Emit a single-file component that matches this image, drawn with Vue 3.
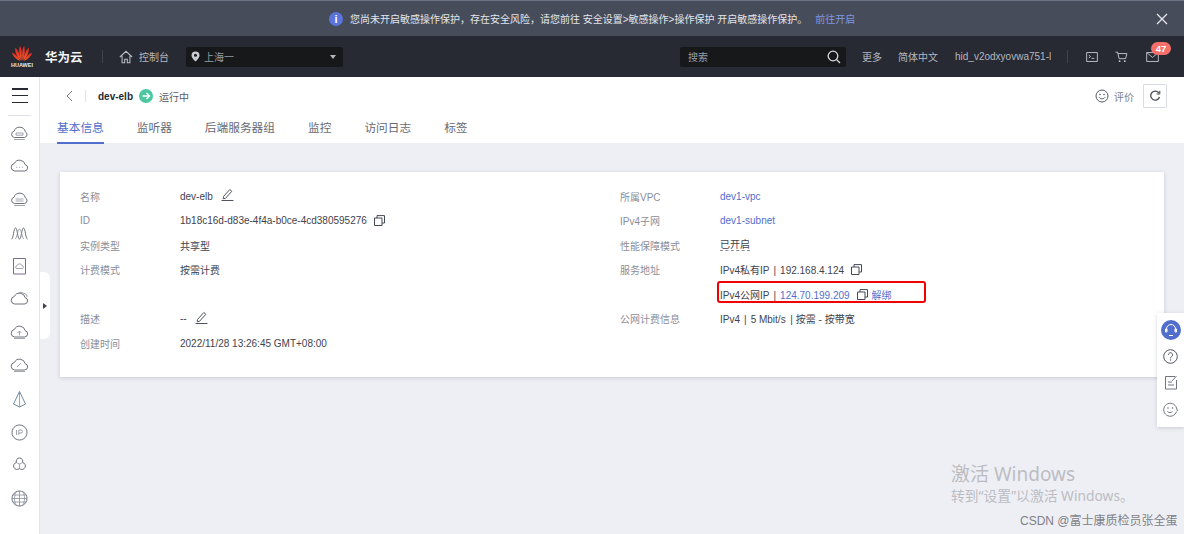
<script setup>
const cloud = 'M5.500 15h10a3.200 3.200 0 0 0 .7-6.300A5.800 5.800 0 0 0 5.300 7.500 3.800 3.800 0 0 0 5.500 15z'
const flatCloud = 'M5.500 14.500h10a3 3 0 0 0 .8-5.700 5.800 5.800 0 0 0-11.200-.6 3.200 3.200 0 0 0 .4 6.300z'

const sideIcons = [
  { base: flatCloud, extra: 'M7 10h7v2.200H7zM5 16.500h11' },
  { base: cloud, extra: 'M7 11.300h1M10 11.300h1M13 11.300h1' },
  { base: flatCloud, extra: 'M6.500 10h8M6.500 12h8M5 16.500h11' },
  { base: 'M2.500 16C4.500 16 4.500 5 6.500 5S8.500 16 10.500 16 12.500 5 14.500 5 16.500 16 18.500 16', extra: 'M6 16C8 16 8.500 6 10.500 6S13 16 15 16' },
  { base: 'M4.500 2.500h12v15.500h-12z', extra: 'M8 12.500h5a1.300 1.300 0 0 0 .2-2.600 2.800 2.800 0 0 0-5.400 0A1.300 1.300 0 0 0 8 12.500z', tint: '#6b5b85' },
  { base: cloud, extra: 'M9 4.500a4 4 0 0 1 3-1.200l4 1.500a3 3 0 0 1 2 3.500' },
  { base: cloud, extra: 'M10.500 13.500V9M8.500 11l2-2 2 2M5 16.500h11' },
  { base: cloud, extra: 'M8 12l3.500-3.500M11.500 8.300h.6M5 16.500h11' },
  { base: 'M10.500 2.500L4.500 15l6 3 6-3z', extra: 'M10.500 2.500V18', tint: '#5f7d96' },
  { base: 'M10.500 3a7.500 7.500 0 1 0 .01 0z', extra: 'M7.500 8v5M9.800 13V8h2.200a1.500 1.500 0 0 1 0 3H9.800' },
  { base: 'M10.500 3a3.200 3.200 0 0 1 3 4.500 3.500 3.500 0 1 1-3 6 3.500 3.500 0 1 1-3-6 3.200 3.200 0 0 1 3-4.500z', extra: 'M7.500 7.500a4 4 0 0 0 6 0M10.500 13.500V9' },
  { base: 'M10.500 3a7.500 7.500 0 1 0 .01 0z', extra: 'M3 10.500h15M4 7h13M4 14h13M10.500 3v15M7 4c-2 4-2 9 0 13M14 4c2 4 2 9 0 13' }
]

const leftRows = [
  { label: '名称', value: 'dev-elb', edit: true },
  { label: 'ID', value: '1b18c16d-d83e-4f4a-b0ce-4cd380595276', copy: true },
  { label: '实例类型', value: '共享型' },
  { label: '计费模式', value: '按需计费' },
  { label: '', value: '' },
  { label: '描述', value: '--', edit: true },
  { label: '创建时间', value: '2022/11/28 13:26:45 GMT+08:00' }
]

const tabs = ['基本信息', '监听器', '后端服务器组', '监控', '访问日志', '标签']
</script>

<template>
  <div class="page">
    <div class="notice">
      <span class="notice-icon">i</span>
      <span class="notice-text">您尚未开启敏感操作保护，存在安全风险，请您前往 安全设置&gt;敏感操作&gt;操作保护 开启敏感操作保护。</span>
      <a class="notice-link">前往开启</a>
      <svg class="notice-close" width="12" height="12" viewBox="0 0 12 12"><path d="M1 1l10 10M11 1L1 11" stroke="#e6e8ee" stroke-width="1.300" fill="none" /></svg>
    </div>

    <header class="topbar">
      <div class="logo">
        <svg width="22" height="17" viewBox="0 0 24 18">
          <defs>
            <linearGradient id="petal" x1="0" y1="0" x2="0" y2="1">
              <stop offset="0" stop-color="#e3261c" />
              <stop offset="1" stop-color="#f0592b" />
            </linearGradient>
          </defs>
          <g fill="url(#petal)">
            <path d="M11.400 17C8.800 11 8.400 5.500 9.600 .5 11.400 2.500 12.400 9 11.400 17z" />
            <path d="M12.600 17C15.200 11 15.600 5.500 14.400 .5 12.600 2.500 11.600 9 12.600 17z" />
            <path d="M10.600 17C6.800 13 4.200 8.500 4.600 2.800 7 4.500 10.200 10.500 10.600 17z" />
            <path d="M13.400 17C17.200 13 19.800 8.500 19.400 2.800 17 4.500 13.800 10.500 13.400 17z" />
            <path d="M10 17.300C6 15.500 2.200 12.500 .8 7.800c3.800 1.200 7.200 5 9.200 9.500z" />
            <path d="M14 17.300c4-1.800 7.800-4.800 9.200-9.500-3.800 1.200-7.200 5-9.200 9.500z" />
          </g>
        </svg>
        <span class="logo-word">HUAWEI</span>
      </div>
      <span class="brand">华为云</span>
      <span class="top-sep"></span>
      <svg class="home" width="14" height="14" viewBox="0 0 16 16"><path d="M1 8l7-6.500L15 8M3.500 6.500V14.500h3v-4h3v4h3V6.500" fill="none" stroke="#b9bcc4" stroke-width="1.200" /></svg>
      <span class="console">控制台</span>
      <div class="region">
        <svg width="9" height="11" viewBox="0 0 9 11"><path d="M4.500 0.500a4 4 0 0 1 4 4c0 2.500-4 6-4 6s-4-3.500-4-6a4 4 0 0 1 4-4z" fill="#c9ccd2" /><circle cx="4.500" cy="4.300" r="1.500" fill="#17181a" /></svg>
        <span class="region-name">上海一</span>
        <span class="caret"></span>
      </div>
      <div class="search">
        <span>搜索</span>
        <svg width="14" height="14" viewBox="0 0 14 14"><circle cx="6" cy="6" r="4.800" fill="none" stroke="#d8dae0" stroke-width="1.300" /><path d="M9.500 9.500l3.500 3.500" stroke="#d8dae0" stroke-width="1.300" /></svg>
      </div>
      <span class="top-link more">更多</span>
      <span class="top-link lang">简体中文</span>
      <span class="top-link user">hid_v2odxyovwa751-l</span>
      <span class="top-sep user-sep"></span>
      <svg class="tool" width="12" height="10" viewBox="0 0 13 11"><path d="M.6.600h11.800v9.800H.6zM3 3.500l2 1.500-2 1.500M6 7h3" fill="none" stroke="#c4c7ce" stroke-width="1" /></svg>
      <svg class="tool" width="13" height="12" viewBox="0 0 14 12"><path d="M.5.800h2.300l1.600 7h7l1.400-5.500H3.200" fill="none" stroke="#c4c7ce" stroke-width="1" /><circle cx="5" cy="10.500" r="1" fill="#c4c7ce" /><circle cx="10.500" cy="10.500" r="1" fill="#c4c7ce" /></svg>
      <div class="mail">
        <svg width="13" height="10" viewBox="0 0 14 11"><path d="M.6.600h12.800v9.800H.6zM.6.600L7 6l6.400-5.400" fill="none" stroke="#c4c7ce" stroke-width="1" /></svg>
        <span class="badge">47</span>
      </div>
    </header>

    <div class="body">
      <aside class="sidebar">
        <div class="burger"><i></i><i></i><i></i></div>
        <div class="side-line"></div>
        <svg v-for="(icon, i) in sideIcons" :key="i" class="side-icon" width="21" height="21" viewBox="0 0 21 21">
          <path :d="icon.base" fill="none" :stroke="icon.tint || '#5c606c'" stroke-width="0.900" />
          <path :d="icon.extra" fill="none" stroke="#8a8e99" stroke-width="0.800" />
        </svg>
      </aside>

      <main class="main">
        <div class="head">
          <div class="head-row">
            <svg class="back" width="7" height="12" viewBox="0 0 7 12"><path d="M6 1L1 6l5 5" fill="none" stroke="#7b7f8a" stroke-width="1" /></svg>
            <span class="head-sep"></span>
            <span class="head-name">dev-elb</span>
            <span class="status-dot">
              <svg width="10" height="10" viewBox="0 0 10 10"><path d="M1.500 5h7M5.500 2l3 3-3 3" fill="none" stroke="#fff" stroke-width="1.400" /></svg>
            </span>
            <span class="status-text">运行中</span>
            <svg class="rate-icon" width="14" height="14" viewBox="0 0 14 14"><circle cx="7" cy="7" r="6" fill="none" stroke="#555a66" stroke-width="1" /><path d="M4 8.300c1.500 2 4.500 2 6 0" fill="none" stroke="#555a66" stroke-width="1" /><circle cx="5" cy="5.500" r=".8" fill="#555a66" /><circle cx="9" cy="5.500" r=".8" fill="#555a66" /></svg>
            <span class="rate-text">评价</span>
            <button class="refresh">
              <svg width="12" height="12" viewBox="0 0 12 12"><path d="M10 3.200A4.500 4.500 0 1 0 10.500 7" fill="none" stroke="#444954" stroke-width="1.300" /><path d="M10.800.800v3.200H7.600" fill="none" stroke="#444954" stroke-width="1" /></svg>
            </button>
          </div>
          <nav class="tabs">
            <span v-for="(tab, i) in tabs" :key="tab" class="tab" :class="{ active: i === 0 }">{{ tab }}</span>
          </nav>
        </div>

        <section class="card">
          <div class="col">
            <div v-for="(row, i) in leftRows" :key="i" class="row">
              <span class="label">{{ row.label }}</span>
              <span class="value">{{ row.value }}</span>
              <svg v-if="row.edit" class="edit" width="13" height="13" viewBox="0 0 13 13"><path d="M2.500 8.500L8.800 1.500l2 1.800L4.500 10.300l-2.300.5zM.5 12.500h12" fill="none" stroke="#50555f" stroke-width="1" /></svg>
              <svg v-if="row.copy" class="copy" width="11" height="11" viewBox="0 0 11 11"><path d="M.5 3h7.500v7.500H.5zM3 3V.6h7.500V8H8" fill="none" stroke="#444954" stroke-width="1" /></svg>
            </div>
          </div>
          <div class="col">
            <div class="row"><span class="label">所属VPC</span><a class="value link">dev1-vpc</a></div>
            <div class="row"><span class="label">IPv4子网</span><a class="value link">dev1-subnet</a></div>
            <div class="row"><span class="label">性能保障模式</span><span class="value dashed">已开启</span></div>
            <div class="row">
              <span class="label">服务地址</span>
              <span class="value">IPv4私有IP<span class="bar">|</span>192.168.4.124</span>
              <svg class="copy" width="11" height="11" viewBox="0 0 11 11"><path d="M.5 3h7.500v7.500H.5zM3 3V.6h7.500V8H8" fill="none" stroke="#444954" stroke-width="1" /></svg>
            </div>
            <div class="row">
              <span class="label"></span>
              <span class="value">IPv4公网IP<span class="bar">|</span><a class="link">124.70.199.209</a></span>
              <svg class="copy" width="11" height="11" viewBox="0 0 11 11"><path d="M.5 3h7.500v7.500H.5zM3 3V.6h7.500V8H8" fill="none" stroke="#444954" stroke-width="1" /></svg>
              <a class="link unbind">解绑</a>
              <span class="highlight"></span>
            </div>
            <div class="row"><span class="label">公网计费信息</span><span class="value">IPv4<span class="bar">|</span>5 Mbit/s<span class="bar tight">|</span>按需 - 按带宽</span></div>
          </div>
        </section>
      </main>
    </div>

    <div class="handle"><span></span></div>

    <div class="float-bar">
      <span class="service">
        <svg width="14" height="14" viewBox="0 0 14 14"><path d="M2.500 8V6a4.500 4.500 0 0 1 9 0v2M1.500 6h1.500v3H1.500zM11 6h1.500v3H11zM5 12.500h4" fill="none" stroke="#fff" stroke-width="1" /></svg>
      </span>
      <svg width="15" height="15" viewBox="0 0 15 15"><circle cx="7.500" cy="7.500" r="6.800" fill="none" stroke="#50555f" stroke-width="1" /><path d="M5.400 5.800a2.100 2.100 0 1 1 3.200 1.800c-.8.500-1.100.9-1.100 1.700" fill="none" stroke="#50555f" stroke-width="1" /><circle cx="7.500" cy="11" r=".7" fill="#50555f" /></svg>
      <svg width="14" height="15" viewBox="0 0 14 15"><path d="M11 1.500H1.500v12.500h11V5M4 7h4M4 10h6M8 6l4.500-5" fill="none" stroke="#70747f" stroke-width="1" /></svg>
      <svg width="15" height="15" viewBox="0 0 15 15"><path d="M13.500 9.500a6.500 6.500 0 1 1 0-3.500l1 3" fill="none" stroke="#70747f" stroke-width="1" /><circle cx="5" cy="6" r=".8" fill="#70747f" /><circle cx="9.500" cy="6" r=".8" fill="#70747f" /><path d="M4.500 9.500c1.500 1.500 3.500 1.500 5 0" fill="none" stroke="#70747f" stroke-width="1" /></svg>
    </div>

    <div class="activate">
      <div class="activate-title">激活 Windows</div>
      <div class="activate-sub">转到“设置”以激活 Windows。</div>
    </div>
    <div class="csdn">CSDN @富士康质检员张全蛋</div>
  </div>
</template>

<style>
html,
body {
  margin: 0;
  overflow: hidden;
}
</style>

<style scoped>
.page {
  position: relative;
  width: 1184px;
  height: 534px;
  overflow: hidden;
  background: #eeeff5;
  color: #3f434d;
  font-family: "Liberation Sans", "Noto Sans CJK SC", sans-serif;
  font-size: 10px;
  display: flex;
  flex-direction: column;
}

.notice {
  height: 36px;
  flex: none;
  box-sizing: border-box;
  padding-left: 329px;
  display: flex;
  align-items: center;
  background: #474c5a;
  border-top: 1px solid #6c7184;
  color: #e4e6eb;
}

.notice-icon {
  width: 14px;
  height: 14px;
  border-radius: 50%;
  background: #5a74dc;
  color: #fff;
  font-size: 11px;
  font-weight: 700;
  line-height: 14px;
  text-align: center;
  margin-right: 7px;
}

.notice-link {
  margin-left: 8px;
  color: #7f97e6;
}

.notice-close {
  margin-left: auto;
  margin-right: 16px;
}

.topbar {
  height: 41px;
  flex: none;
  display: flex;
  align-items: center;
  background: #272a33;
  color: #b4b7bf;
}

.logo {
  width: 24px;
  margin-left: 10px;
  display: flex;
  flex-direction: column;
  align-items: center;
}

.logo-word {
  color: #e8e8e8;
  font-size: 5.500px;
  line-height: 7px;
  font-weight: 700;
}

.brand {
  margin-left: 11px;
  color: #f2f3f5;
  font-size: 12.500px;
  font-weight: 700;
}

.top-sep {
  width: 1px;
  height: 13px;
  margin-left: 19px;
  background: #3f434e;
}

.home {
  margin-left: 16px;
}

.console {
  margin-left: 6.500px;
}

.region {
  width: 157px;
  height: 20px;
  box-sizing: border-box;
  margin-left: 17px;
  padding: 0 7px 0 5px;
  display: flex;
  align-items: center;
  background: #17181a;
  border-radius: 2px;
  color: #9a9da5;
}

.region-name {
  margin-left: 4px;
}

.caret {
  margin-left: auto;
  border-left: 3px solid transparent;
  border-right: 3px solid transparent;
  border-top: 4px solid #b4b7bf;
}

.search {
  width: 166px;
  height: 20px;
  box-sizing: border-box;
  margin-left: 337px;
  padding: 0 5px 0 8px;
  display: flex;
  align-items: center;
  justify-content: space-between;
  background: #17181a;
  border-radius: 2px;
  color: #9a9da5;
}

.more {
  margin-left: 16px;
}

.lang {
  margin-left: 16px;
}

.user {
  margin-left: 17px;
  width: 97px;
  white-space: nowrap;
  overflow: hidden;
}

.user-sep {
  margin-left: 15px;
}

.tool {
  margin-left: 17.500px;
}

.mail {
  position: relative;
  margin-left: 18px;
  display: flex;
}

.badge {
  position: absolute;
  left: 5px;
  top: -10px;
  width: 20px;
  height: 13px;
  border-radius: 7px;
  background: #f66f6a;
  color: #fff;
  font-size: 9.500px;
  font-weight: 700;
  line-height: 13px;
  text-align: center;
}

.body {
  flex: 1;
  min-height: 0;
  display: flex;
}

.sidebar {
  width: 40px;
  flex: none;
  box-sizing: border-box;
  background: #fff;
  border-right: 1px solid #e4e6ec;
  display: flex;
  flex-direction: column;
  align-items: center;
  padding-top: 11px;
}

.burger {
  width: 16px;
  height: 15px;
  display: flex;
  flex-direction: column;
  justify-content: space-between;
}

.burger i {
  display: block;
  height: 1.500px;
  background: #272a33;
}

.side-line {
  width: 23px;
  height: 1px;
  margin: 12px 0 7px;
  background: #e0e2e8;
}

.side-icon {
  flex: none;
  margin-bottom: 12.200px;
}

.main {
  flex: 1;
  min-width: 0;
}

.head {
  height: 68px;
  box-sizing: border-box;
  padding: 7px 17px 0;
  background: #fff;
  border-bottom: 2px solid #eeeff3;
}

.head-row {
  height: 24px;
  display: flex;
  align-items: center;
}

.back {
  margin-left: 9px;
}

.head-sep {
  width: 1px;
  height: 12px;
  margin-left: 12px;
  background: #e2e3e8;
}

.head-name {
  margin-left: 12px;
  color: #252830;
  font-weight: 700;
}

.status-dot {
  width: 14px;
  height: 14px;
  margin-left: 6px;
  border-radius: 50%;
  background: #4cc79f;
  display: flex;
  align-items: center;
  justify-content: center;
}

.status-text {
  margin-left: 6px;
  color: #575b66;
}

.rate-icon {
  margin-left: auto;
}

.rate-text {
  margin-left: 5px;
  color: #7b7f8a;
}

.refresh {
  width: 24px;
  height: 24px;
  margin-left: 9px;
  padding: 0;
  display: flex;
  align-items: center;
  justify-content: center;
  background: #fff;
  border: 1px solid #d9dbe2;
  border-radius: 1px;
}

.tabs {
  display: flex;
  gap: 33px;
  margin-top: 5px;
}

.tab {
  height: 31px;
  box-sizing: border-box;
  padding-top: 5px;
  font-size: 11.700px;
  color: #666a75;
}

.tab.active {
  color: #526ecc;
  border-bottom: 2px solid #526ecc;
}

.card {
  margin: 27px 20px 0;
  height: 205px;
  box-sizing: border-box;
  padding: 12px 20px;
  background: #fff;
  box-shadow: 0 1px 4px rgba(60, 65, 80, 0.22);
  display: grid;
  grid-template-columns: 540px 1fr;
}

.row {
  position: relative;
  height: 24.500px;
  display: flex;
  align-items: center;
}

.label {
  width: 100px;
  flex: none;
  color: #8a8e99;
}

.link {
  color: #526ecc;
}

.bar {
  margin: 0 4px;
}

.bar.tight {
  margin: 0 3px 0 4.500px;
}

.dashed {
  border-bottom: 1px dashed #8a8e99;
  line-height: 11px;
}

.edit {
  margin-left: 8px;
  margin-top: -3px;
}

.copy {
  margin-left: 7px;
}

.unbind {
  margin-left: 4px;
}

.highlight {
  position: absolute;
  left: 97px;
  top: -1px;
  width: 209px;
  height: 22px;
  box-sizing: border-box;
  border: 2.500px solid #f00000;
  border-radius: 3px;
}

.handle {
  position: absolute;
  left: 40px;
  top: 272px;
  width: 10px;
  height: 67px;
  background: #fff;
  border-radius: 0 6px 6px 0;
  display: flex;
  align-items: center;
  justify-content: center;
}

.handle span {
  border-top: 3px solid transparent;
  border-bottom: 3px solid transparent;
  border-left: 4px solid #3f434d;
}

.float-bar {
  position: absolute;
  right: 0;
  top: 313px;
  width: 27px;
  height: 114px;
  box-sizing: border-box;
  padding-top: 7px;
  background: #fff;
  box-shadow: 0 1px 4px rgba(60, 65, 80, 0.2);
  display: flex;
  flex-direction: column;
  align-items: center;
  gap: 11.500px;
}

.service {
  width: 20px;
  height: 20px;
  margin-bottom: -3px;
  border-radius: 50%;
  background: #526ecc;
  display: flex;
  align-items: center;
  justify-content: center;
}

.activate {
  position: absolute;
  left: 951px;
  top: 462px;
  color: #bcbdc2;
  font-family: "Noto Sans", "Noto Sans CJK SC", sans-serif;
}

.activate-title {
  font-size: 19px;
  line-height: 25px;
}

.activate-sub {
  font-size: 13.800px;
  line-height: 17px;
}

.csdn {
  position: absolute;
  left: 1020px;
  top: 514px;
  color: #808186;
  font-size: 12px;
  line-height: 15px;
  white-space: nowrap;
}
</style>
